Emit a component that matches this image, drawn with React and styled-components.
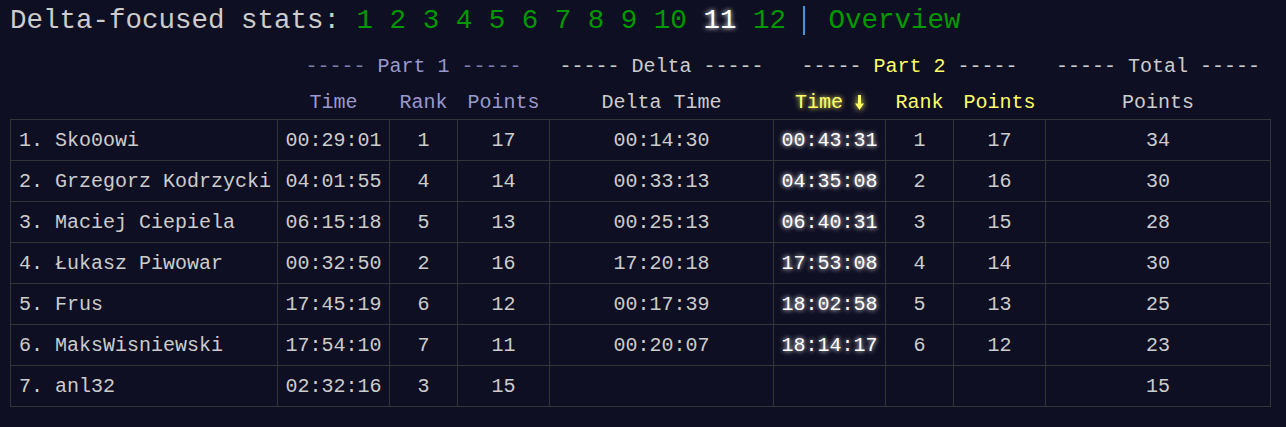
import React from "react";
import styled, { createGlobalStyle } from "styled-components";

const Global = createGlobalStyle`
  html, body { margin: 0; padding: 0; background: #0f0f23; }
  body { font-family: "Liberation Mono", "DejaVu Sans Mono", monospace; color: #cccccc; }
`;

const Page = styled.div`
  padding: 0 10px;
  min-height: 427px;
  box-sizing: border-box;
`;

const Title = styled.div`
  height: 40px;
  line-height: 42px;
  font-size: 27.5px;
  white-space: pre;
  margin-bottom: 7px;
`;

const DayLink = styled.span`
  color: ${(p) => (p.$active ? "#ffffff" : "#009900")};
  text-shadow: ${(p) => (p.$active ? "0 0 5px #ffffff" : "none")};
`;

const Pipe = styled.span`
  display: inline-block;
  vertical-align: middle;
  width: 2px;
  height: 29px;
  background: #3d9ad6;
  margin: 0 23px 0 1px;
`;

const Table = styled.table`
  border-collapse: collapse;
  table-layout: fixed;
  width: 1260px;
  font-size: 20px;
`;

const GroupCell = styled.th`
  font-weight: normal;
  height: 34px;
  padding: 2px 0 0;
  text-align: center;
  white-space: pre;
  color: ${(p) => p.$color};
`;

const Dash = styled.span`
  color: ${(p) => p.$color};
`;

const HeadCell = styled.th`
  font-weight: normal;
  height: 34px;
  padding: 2px 0 0;
  text-align: center;
  white-space: pre;
  color: ${(p) => p.$color};
  text-shadow: ${(p) => (p.$glow ? `0 0 5px ${p.$color}` : "none")};
`;

const Arrow = styled.svg`
  display: inline-block;
  vertical-align: -2px;
  filter: drop-shadow(0 0 3px #ffff66);
`;

const Cell = styled.td`
  border: 1px solid #333338;
  height: 40px;
  padding: 0 ${(p) => (p.$left ? "8px" : "0")};
  text-align: ${(p) => (p.$left ? "left" : "center")};
  white-space: pre;
  color: ${(p) => (p.$bright ? "#ffffff" : "#cccccc")};
  text-shadow: ${(p) => (p.$bright ? "0 0 5px #ffffff" : "none")};
`;

const rows = [
  ["1. Sko0owi", "00:29:01", "1", "17", "00:14:30", "00:43:31", "1", "17", "34"],
  ["2. Grzegorz Kodrzycki", "04:01:55", "4", "14", "00:33:13", "04:35:08", "2", "16", "30"],
  ["3. Maciej Ciepiela", "06:15:18", "5", "13", "00:25:13", "06:40:31", "3", "15", "28"],
  ["4. Łukasz Piwowar", "00:32:50", "2", "16", "17:20:18", "17:53:08", "4", "14", "30"],
  ["5. Frus", "17:45:19", "6", "12", "00:17:39", "18:02:58", "5", "13", "25"],
  ["6. MaksWisniewski", "17:54:10", "7", "11", "00:20:07", "18:14:17", "6", "12", "23"],
  ["7. anl32", "02:32:16", "3", "15", "", "", "", "", "15"],
];

const widths = [267, 112, 68, 92, 224, 112, 68, 92, 225];

const P1 = "#9999cc";
const P2 = "#ffff66";
const GR = "#cccccc";

export default function App() {
  const days = ["1", "2", "3", "4", "5", "6", "7", "8", "9", "10", "11", "12"];
  return (
    <Page>
      <Global />
      <Title>
        <span>Delta-focused stats: </span>
        {days.map((d, i) => (
          <React.Fragment key={d}>
            <DayLink $active={d === "11"}>{d}</DayLink>
            {i < days.length - 1 ? " " : ""}
          </React.Fragment>
        ))}
        <span> </span>
        <Pipe />
        <DayLink>Overview</DayLink>
      </Title>
      <Table>
        <colgroup>
          {widths.map((w, i) => (
            <col key={i} style={{ width: w }} />
          ))}
        </colgroup>
        <thead>
          <tr>
            <GroupCell />
            <GroupCell colSpan={3} $color={P1}>
              <Dash $color="#7c7ca8">-----</Dash> Part 1 <Dash $color="#7c7ca8">-----</Dash>
            </GroupCell>
            <GroupCell $color={GR}>----- Delta -----</GroupCell>
            <GroupCell colSpan={3} $color={P2}>
              <Dash $color={GR}>-----</Dash> Part 2 <Dash $color={GR}>-----</Dash>
            </GroupCell>
            <GroupCell $color={GR}>----- Total -----</GroupCell>
          </tr>
          <tr>
            <HeadCell />
            <HeadCell $color={P1}>Time</HeadCell>
            <HeadCell $color={P1}>Rank</HeadCell>
            <HeadCell $color={P1}>Points</HeadCell>
            <HeadCell $color={GR}>Delta Time</HeadCell>
            <HeadCell $color={P2} $glow>
              {"Time "}
              <Arrow width="9" height="15" viewBox="0 0 9 15">
                <path d="M3 0 H6 V8.5 H9 L4.5 15 L0 8.5 H3 Z" fill="#ffff66" />
              </Arrow>
            </HeadCell>
            <HeadCell $color={P2}>Rank</HeadCell>
            <HeadCell $color={P2}>Points</HeadCell>
            <HeadCell $color={GR}>Points</HeadCell>
          </tr>
        </thead>
        <tbody>
          {rows.map((r) => (
            <tr key={r[0]}>
              {r.map((v, i) => (
                <Cell key={i} $left={i === 0} $bright={i === 5}>
                  {v}
                </Cell>
              ))}
            </tr>
          ))}
        </tbody>
      </Table>
    </Page>
  );
}
